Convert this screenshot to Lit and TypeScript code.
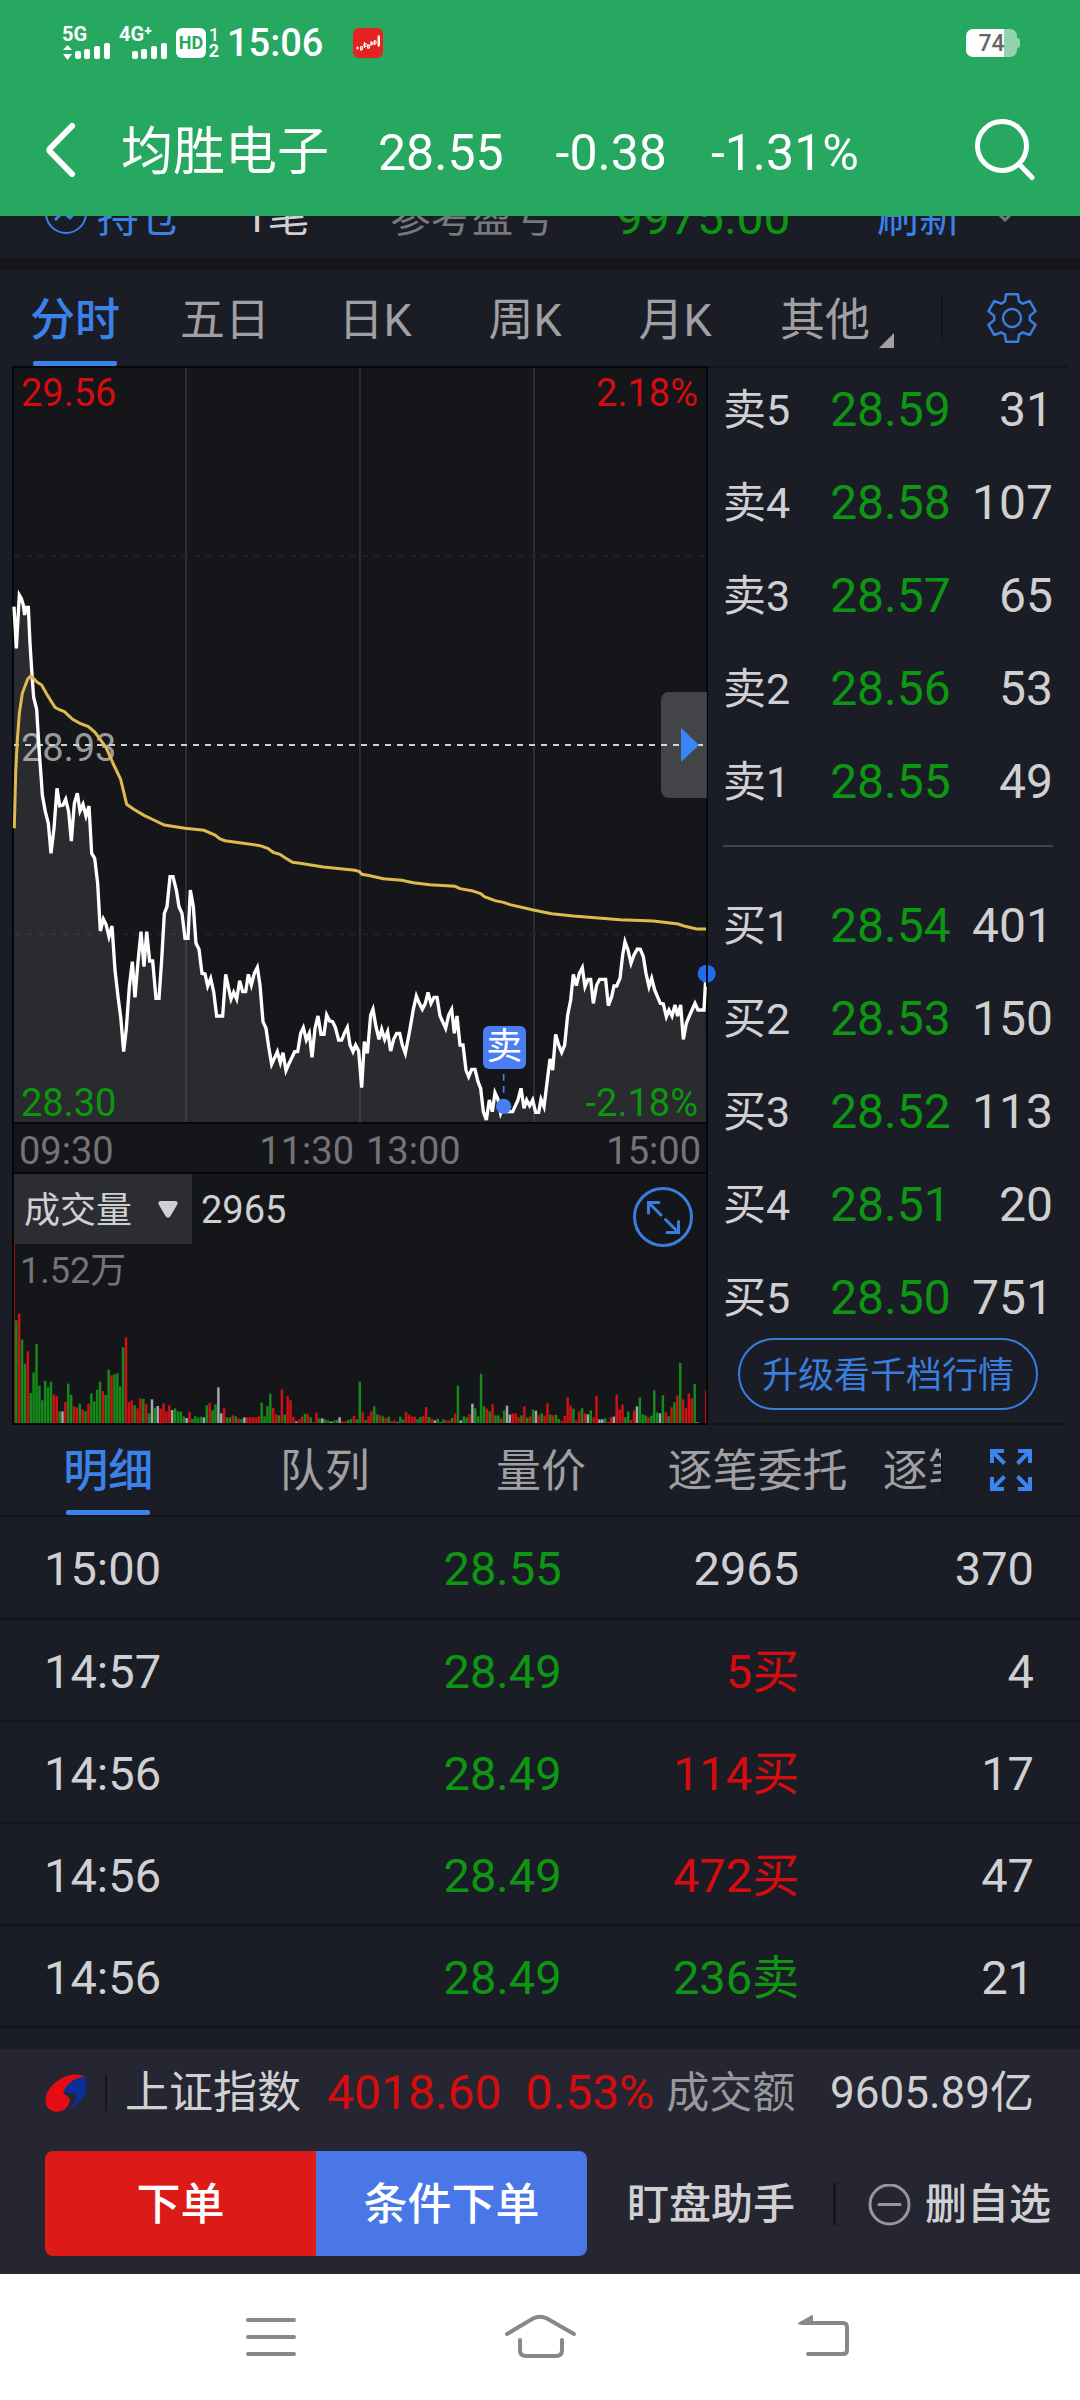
import { LitElement, html, svg, css } from "lit";
import { customElement } from "lit/decorators.js";
import { classMap } from "lit/directives/class-map.js";
import { styleMap } from "lit/directives/style-map.js";

type Point = [number, number];

/* Turns a flat x,y list into points, moved by the given offset. */
const shift = (dx: number, dy: number, flat: number[]): Point[] => {
  const out: Point[] = [];
  for (let i = 0; i < flat.length; i += 2) out.push([flat[i] + dx, flat[i + 1] + dy]);
  return out;
};

/* The plot is 2076 x 2262 units: three units to a pixel on a 1080 wide screen. */
const PLOT_W = 2076;
const PLOT_H = 2262;
const VOL_H = 747;

const PRICE: Point[] = [
  ...shift(-42, -24, [
    42, 740, 49, 865, 58, 705, 64, 715, 70, 735, 74, 765, 78, 742, 85, 742, 90, 850, 97, 960,
    101, 1012, 110, 1048, 118, 1180, 124, 1260,
  ]),
  ...shift(-42, 1116, [
    127, 165, 136, 215, 145, 250, 153, 340, 162, 265, 171, 145, 179, 197, 189, 195, 197, 178,
    206, 215, 214, 303, 223, 190, 232, 160, 240, 213, 249, 193, 258, 228, 267, 198, 275, 340,
    284, 355, 293, 430, 301, 573, 310, 537, 318, 553, 327, 590, 336, 558, 345, 690, 354, 770,
    362, 830, 371, 935, 379, 865, 388, 740, 397, 665, 405, 772, 414, 665, 423, 575, 432, 680,
    440, 575, 449, 663, 458, 663, 468, 775, 477, 775, 485, 660, 493, 520, 501, 500, 510, 410,
    519, 410, 529, 450, 537, 500, 546, 520, 555, 595, 564, 595, 571, 450, 580, 500, 588, 610,
    597, 628, 606, 700, 615, 702, 623, 738, 632, 715, 641, 755, 650, 828, 668, 828, 677, 703,
    686, 745, 693, 777, 701, 757, 710, 777, 719, 722, 728, 755, 737, 755, 745, 703, 754, 735,
    763, 700, 772, 682, 780, 735, 789, 845, 798, 865, 806, 920, 815, 973, 832, 935, 841, 968,
    849, 938, 858, 992, 866, 973, 884, 935, 893, 935, 902, 880, 910, 863, 919, 900, 928, 880,
    936, 952, 945, 865, 954, 828, 963, 883, 972, 883, 980, 825, 989, 843, 998, 845, 1006, 862,
    1016, 900, 1025, 900, 1033, 880, 1042, 862, 1050, 915, 1059, 935, 1067, 915, 1076, 933,
  ]),
  ...shift(1038, 1116, [
    5, 1043, 13, 905, 22, 940, 32, 825, 39, 808, 48, 860, 57, 898, 65, 868, 74, 898, 83, 875,
    92, 933, 101, 898, 110, 880, 119, 880, 127, 915, 136, 940, 148, 878, 160, 808, 169, 768,
    178, 790, 187, 808, 196, 790, 204, 757, 213, 790, 222, 772, 231, 772, 240, 827, 257, 865,
    266, 825, 275, 808, 283, 880, 291, 828, 300, 915, 309, 915, 318, 990, 326, 1010, 335, 988,
    345, 988, 354, 1025, 362, 1045, 370, 1115, 379, 1140, 388, 1080, 397, 1115, 405, 1058,
    414, 1078, 422, 1120, 431, 1097, 440, 1115, 458, 1115, 474, 1080, 483, 1045, 492, 1105,
    500, 1080, 509, 1097, 518, 1080, 527, 1117, 536, 1117, 543, 1078, 552, 1100, 562, 1020,
    570, 957, 578, 990, 587, 883, 596, 915, 605, 937, 614, 915, 623, 825, 632, 780, 640, 703,
    649, 737, 658, 700, 667, 683, 675, 740, 684, 718, 692, 718, 700, 790, 710, 735, 719, 718,
    737, 718, 745, 797, 755, 770, 762, 738, 770, 738, 780, 715, 788, 645, 795, 605, 804, 630,
    813, 670, 822, 645, 832, 627, 841, 628, 850, 650, 858, 700, 867, 740, 875, 715, 884, 750,
    901, 790, 910, 792, 919, 830, 927, 810, 936, 828, 945, 795, 953, 828, 962, 795, 970, 898,
    979, 850, 988, 828, 1005, 790, 1014, 810, 1032, 810, 1037, 715,
  ]),
];

const AVERAGE: Point[] = [
  ...shift(-42, -24, [
    43, 1405, 47, 1240, 52, 1140, 58, 1060, 67, 1000, 83, 957, 92, 948, 100, 955, 112, 967,
    125, 975, 140, 1002, 165, 1042, 180, 1050, 193, 1055, 218, 1078, 240, 1090, 265, 1100,
    285, 1117, 318, 1162, 340, 1212,
  ]),
  ...shift(-42, 1116, [
    362, 118, 380, 193, 400, 207, 432, 226, 455, 237, 493, 255, 555, 265, 612, 271, 645, 285,
    660, 297, 675, 302, 780, 317, 803, 325, 820, 337, 840, 343, 855, 353, 878, 367, 900, 370,
    970, 381, 1065, 391, 1078, 395,
  ]),
  ...shift(1038, 1116, [
    6, 403, 30, 407, 70, 416, 125, 421, 160, 428, 210, 434, 285, 439, 300, 446, 335, 452,
    362, 461, 373, 470, 405, 482, 430, 487, 450, 494, 520, 510, 575, 521, 640, 528, 780, 539,
    880, 543, 955, 552, 975, 559, 1010, 567, 1038, 567,
  ]),
];

/* One entry per minute: colour letter (r up, g down, w flat) and bar height. */
const VOLUME = (
  "r536 g308 r328 g250 g178 r215 g90 g152 g237 g112 g68 g127 g107 g124 r86 r80 g35 w35 r63 g118 " +
  "g85 r50 r46 g58 r40 g35 r58 g89 g65 g100 g124 r96 g84 g160 r143 g146 g149 g110 g227 r257 " +
  "r63 r68 g53 r44 r74 g72 r57 g29 w71 g46 w51 r43 r59 r35 r53 w39 g44 g35 g34 g20 " +
  "w15 r34 g12 g20 g16 g19 w17 g53 r60 g38 g56 w107 w29 r44 g17 g17 r23 g20 r14 g12 " +
  "w17 r17 r17 r17 r17 r20 g61 g20 g51 g88 r45 r26 g23 r101 g25 r80 r68 r19 w5 r11 " +
  "r19 g28 r26 g17 r3 r31 g14 w14 g11 g8 w4 g7 g9 w17 r5 r5 g9 g12 r22 g11 " +
  "g124 r32 g8 r20 r35 g50 g26 r23 g20 r14 g19 r6 r8 w2 g19 g11 r33 r25 r19 r19 " +
  "g11 g18 r22 r48 g18 r13 w8 g13 g4 g11 r8 r8 g15 r28 g112 w8 g20 g17 r26 w58 " +
  "g44 g20 g148 g50 r43 g35 r56 g23 g23 r13 g38 w52 w25 r29 r29 r17 g23 r50 g16 r20 " +
  "g40 w37 r23 g29 r22 r59 g25 r23 g25 g12 r6 r22 r77 r53 g43 r8 r35 g44 r29 w26 " +
  "g38 r17 r82 w11 w11 g14 r4 r17 w19 r85 r40 r55 g17 g34 r9 r37 w50 g77 g26 g23 " +
  "r17 g22 g98 g32 w29 g83 r32 g20 r47 g62 r83 g180 r71 r44 r89 r74 g117 w2 w0 w0 r98"
).split(" ");

const toPoints = (pts: Point[]) => pts.map((p) => p.join(",")).join(" ");

const SELLS = [
  ["卖5", "28.59", "31"],
  ["卖4", "28.58", "107"],
  ["卖3", "28.57", "65"],
  ["卖2", "28.56", "53"],
  ["卖1", "28.55", "49"],
];
const BUYS = [
  ["买1", "28.54", "401"],
  ["买2", "28.53", "150"],
  ["买3", "28.52", "113"],
  ["买4", "28.51", "20"],
  ["买5", "28.50", "751"],
];
const TRADES = [
  { time: "15:00", price: "28.55", volume: "2965", side: "", count: "370" },
  { time: "14:57", price: "28.49", volume: "5买", side: "up", count: "4" },
  { time: "14:56", price: "28.49", volume: "114买", side: "up", count: "17" },
  { time: "14:56", price: "28.49", volume: "472买", side: "up", count: "47" },
  { time: "14:56", price: "28.49", volume: "236卖", side: "down", count: "21" },
];

const base = css`
  * {
    box-sizing: border-box;
  }
  button,
  select {
    font: inherit;
    color: inherit;
    background: none;
    border: 0;
    margin: 0;
    padding: 0;
    cursor: pointer;
  }
  svg {
    display: block;
    flex: none;
  }
  table {
    width: 100%;
    border-collapse: collapse;
    table-layout: fixed;
  }
  td,
  th {
    padding: 0;
    font-weight: 400;
    text-align: left;
  }
  .up {
    color: #d60c0e;
  }
  .down {
    color: #0d9612;
  }
`;

@customElement("status-bar")
export class StatusBar extends LitElement {
  static styles = [
    base,
    css`
      :host {
        display: flex;
        align-items: center;
        height: 84px;
        padding: 2px 60px 0 62px;
        color: #fff;
      }
      .signal {
        display: flex;
        flex-direction: column;
        width: 48px;
        margin-right: 9px;
        font-size: 20px;
        line-height: 16px;
        font-weight: 700;
      }
      .hd {
        display: grid;
        place-items: center;
        width: 30px;
        height: 30px;
        border-radius: 6px;
        background: #fff;
        color: #26a861;
        font-size: 18px;
        line-height: 30px;
        font-weight: 700;
      }
      .sims {
        display: flex;
        flex-direction: column;
        margin-left: 2px;
        width: 12px;
        font-size: 18px;
        line-height: 16px;
        font-weight: 500;
        text-align: center;
      }
      .sims b {
        font-weight: 700;
      }
      .clock {
        margin-left: 7px;
        font-size: 38px;
        line-height: 44px;
        font-weight: 500;
      }
      .app {
        margin-left: 30px;
      }
      .battery {
        display: flex;
        align-items: center;
        margin-left: auto;
      }
      .cell {
        width: 51px;
        height: 28px;
        border-radius: 7px;
        background: linear-gradient(90deg, #fff 74%, #93d4b0 74%);
        color: #666;
        font-size: 23px;
        line-height: 29px;
        font-weight: 500;
        text-align: center;
      }
      .nub {
        width: 3px;
        height: 10px;
        border-radius: 0 3px 3px 0;
        background: #93d4b0;
      }
    `,
  ];

  private bars() {
    return svg`
      <rect x="13" y="9" width="6" height="8" rx="2"></rect>
      <rect x="22" y="7" width="6" height="10" rx="2"></rect>
      <rect x="32" y="4" width="6" height="13" rx="2"></rect>
      <rect x="42" y="1" width="6" height="16" rx="2"></rect>`;
  }

  render() {
    return html`
      <div class="signal">
        <span>5G</span>
        <svg width="48" height="18" viewBox="0 0 48 18" fill="#fff">
          <path d="M5.500 3l4.500 5h-9zM5.500 18l4.500-6h-9z"></path>
          ${this.bars()}
        </svg>
      </div>
      <div class="signal">
        <span>4G⁺</span>
        <svg width="48" height="18" viewBox="0 0 48 18" fill="#fff">${this.bars()}</svg>
      </div>
      <span class="hd">HD</span>
      <span class="sims"><span>1</span><b>2</b></span>
      <span class="clock">15:06</span>
      <svg class="app" width="30" height="30" viewBox="0 0 30 30">
        <rect width="30" height="30" rx="6" fill="#e62222"></rect>
        <g fill="none" stroke="#fff">
          <path d="M3 20h3M4.500 18.500v3M8 18v5M7.500 18.500h2v3h-2zM11.500 14v6M11 15.500h2v3h-2z"></path>
          <path d="M15 16v5M14.500 17h2v3h-2zM18 13v5M18 14.500h2v2h-2z"></path>
          <path d="M21.500 12v5M21 13h2v3h-2zM25 8.500h1.500v9H25zM25.800 7v12"></path>
        </g>
      </svg>
      <div class="battery"><span class="cell">74</span><span class="nub"></span></div>
    `;
  }
}

@customElement("quote-header")
export class QuoteHeader extends LitElement {
  static styles = [
    base,
    css`
      :host {
        display: flex;
        align-items: center;
        height: 132px;
        padding: 0 44px 0 43px;
        color: #fff;
        font-size: 50px;
        line-height: 60px;
      }
      .back {
        margin-right: 42px;
      }
      h1,
      span {
        padding-top: 6px;
      }
      h1 {
        margin: 0 49px 0 0;
        font-size: 52px;
        line-height: 60px;
        font-weight: 400;
      }
      .price {
        margin-right: 52px;
      }
      .change {
        margin-right: 44px;
      }
      .search {
        margin-left: auto;
      }
    `,
  ];

  render() {
    return html`
      <button class="back" aria-label="返回">
        <svg width="36" height="60" viewBox="0 0 36 60" fill="none" stroke="#fff" stroke-width="6" stroke-linecap="round" stroke-linejoin="round">
          <path d="M29 6L7 28.500Q5.500 30 7 31.500L29 54"></path>
        </svg>
      </button>
      <h1>均胜电子</h1>
      <span class="price">28.55</span>
      <span class="change">-0.38</span>
      <span>-1.31%</span>
      <button class="search" aria-label="搜索">
        <svg width="64" height="64" viewBox="0 0 64 64" fill="none" stroke="#fff" stroke-width="5" stroke-linecap="round">
          <circle cx="30" cy="28" r="24.500"></circle>
          <path d="M47 46L60 59.500"></path>
        </svg>
      </button>
    `;
  }
}

@customElement("position-row")
export class PositionRow extends LitElement {
  static styles = [
    base,
    css`
      :host {
        display: grid;
        grid-template-columns: 52fr 147fr 146fr 226fr 261fr 113fr 90fr;
        align-items: end;
        align-content: end;
        height: 42px;
        padding: 0 0 10px 45px;
        overflow: hidden;
        color: #d0d0d2;
        font-size: 42px;
        line-height: 60px;
        white-space: nowrap;
      }
      .blue {
        color: #3a82e8;
        text-align: left;
      }
      .dim {
        color: #77787c;
        font-size: 41px;
      }
      .profit {
        font-size: 48px;
      }
    `,
  ];

  render() {
    return html`
      <svg width="44" height="58" viewBox="0 0 44 58" fill="none" stroke="#3a82e8" stroke-width="2">
        <circle cx="21" cy="23" r="20"></circle>
        <path stroke-width="3" d="M10 30l8-8 7 6 7-8"></path>
      </svg>
      <span class="blue">持仓</span>
      <span>1笔</span>
      <span class="dim">参考盈亏</span>
      <span class="down profit">9975.00</span>
      <button class="blue">刷新</button>
      <svg width="30" height="56" viewBox="0 0 30 56" fill="none" stroke="#77787c" stroke-width="3">
        <path d="M3 16l12 12 12-12"></path>
      </svg>
    `;
  }
}

@customElement("period-tabs")
export class PeriodTabs extends LitElement {
  static styles = [
    base,
    css`
      :host {
        display: grid;
        grid-template-columns: minmax(0, 900fr) minmax(0, 180fr);
        height: 96px;
        color: #a0a0a3;
        font-size: 45px;
        line-height: 60px;
      }
      nav {
        display: grid;
        grid-template-columns: repeat(6, 1fr);
      }
      .tab {
        display: flex;
        flex-direction: column;
        align-items: center;
        justify-content: flex-end;
      }
      .tab::after {
        content: "";
        width: 84px;
        height: 5px;
        margin-top: 10px;
        border-radius: 2px;
      }
      .on {
        color: #3a82e8;
        font-weight: 500;
      }
      .on::after {
        background: #3a82e8;
      }
      .more {
        position: relative;
      }
      .corner {
        position: absolute;
        right: 6px;
        bottom: 18px;
      }
      .tools {
        display: flex;
        align-items: center;
        gap: 43px;
        padding-left: 41px;
      }
      .rule {
        width: 2px;
        height: 46px;
        background: #14151a;
      }
    `,
  ];

  private gear() {
    const pts: string[] = [];
    const add = (deg: number, r: number) => {
      const a = (deg * Math.PI) / 180;
      pts.push(`${(26 + r * Math.sin(a)).toFixed(2)},${(26 - r * Math.cos(a)).toFixed(2)}`);
    };
    for (let i = 0; i < 6; i++) {
      add(i * 60 - 23, 18);
      add(i * 60 - 14, 24.5);
      add(i * 60 + 14, 24.5);
      add(i * 60 + 23, 18);
    }
    return pts.join(" ");
  }

  render() {
    const tabs = ["分时", "五日", "日K", "周K", "月K"];
    return html`
      <nav>
        ${tabs.map((t, i) => html`<button class=${classMap({ tab: true, on: i === 0 })}>${t}</button>`)}
        <button class="tab more">
          其他
          <svg class="corner" width="15" height="15" viewBox="0 0 15 15" fill="#a0a0a3"><path d="M15 0v15H0z"></path></svg>
        </button>
      </nav>
      <div class="tools">
        <span class="rule"></span>
        <button aria-label="设置">
          <svg width="52" height="52" viewBox="0 0 52 52" fill="none" stroke="#3a7ddc" stroke-width="2.500" stroke-linejoin="round">
            <polygon points=${this.gear()}></polygon>
            <circle cx="26" cy="26" r="9"></circle>
          </svg>
        </button>
      </div>
    `;
  }
}

@customElement("price-chart")
export class PriceChart extends LitElement {
  static styles = [
    base,
    css`
      :host {
        display: block;
        background: #15161a;
        color: #747478;
        font-size: 38px;
        line-height: 40px;
      }
      .plot {
        position: relative;
        border: 2px solid #060709;
      }
      .lines {
        position: relative;
        width: 100%;
        height: auto;
        overflow: visible;
      }
      .label {
        position: absolute;
      }
      .left {
        left: 7px;
      }
      .right {
        right: 8px;
      }
      .top {
        top: 5px;
      }
      .bottom {
        bottom: -1px;
      }
      .middle {
        top: 50%;
        margin-top: -17px;
        color: #99999c;
      }
      .handle {
        position: absolute;
        right: -1px;
        top: 50%;
        width: 46px;
        height: 106px;
        margin-top: -53px;
        border-radius: 8px 0 0 8px;
        background: rgba(255, 255, 255, 0.2);
      }
      .handle svg {
        margin-left: 20px;
      }
      .mark {
        position: absolute;
        width: 43px;
        height: 43px;
        margin-left: -21px;
        border-radius: 6px;
        background: #4a7cf2;
        color: #fff;
        font-size: 36px;
        line-height: 43px;
        text-align: center;
      }
      .axis {
        display: grid;
        grid-template-columns: 1fr auto auto 1fr;
        column-gap: 12px;
        align-items: center;
        height: 48px;
        padding: 5px 5px 0;
        border: solid #060709;
        border-width: 0 2px;
      }
      .axis :last-child {
        text-align: right;
      }
      .volume {
        position: relative;
        height: 253px;
        border: 2px solid #060709;
      }
      .head {
        display: flex;
        align-items: center;
        gap: 9px;
        color: #d0d0d2;
      }
      .head span {
        padding-top: 2px;
      }
      .picker {
        position: relative;
      }
      .picker select {
        appearance: none;
        display: block;
        width: 178px;
        height: 70px;
        padding: 3px 0 0 10px;
        background: #2c2d32;
        font-size: 36px;
      }
      .picker svg {
        position: absolute;
        right: 14px;
        top: 27px;
        pointer-events: none;
      }
      .peak {
        padding: 7px 6px 0;
        font-size: 36px;
      }
      .expand {
        position: absolute;
        right: 13px;
        top: 13px;
      }
      .bars {
        position: absolute;
        inset: 0;
        width: 100%;
        height: 100%;
        pointer-events: none;
      }
    `,
  ];

  render() {
    const line = toPoints(PRICE);
    const tone: Record<string, string> = { r: "#cc1212", g: "#158a1a", w: "#a4a5aa" };
    const mark: Point = [1469, 2215];
    const markStyle = {
      left: `${((mark[0] / PLOT_W) * 100).toFixed(2)}%`,
      top: `${((1974 / PLOT_H) * 100).toFixed(2)}%`,
    };
    return html`
      <div class="plot">
        <span class="label left middle">28.93</span>
        <svg class="lines" viewBox="0 0 ${PLOT_W} ${PLOT_H}" fill="none">
          <g stroke="#2b2d36" stroke-width="6">
            ${[516, 1038, 1560].map((x) => svg`<path d="M${x} 0V${PLOT_H}"></path>`)}
          </g>
          <g stroke="#23252a" stroke-width="5" stroke-dasharray="18 18">
            <path d="M0 563H2076M0 1699H2076"></path>
          </g>
          <path d="M0 1131H2076" stroke="#cfcfcf" stroke-width="6" stroke-dasharray="18 18" stroke-dashoffset="3"></path>
          <polygon points="0,${PLOT_H} ${line} ${PLOT_W},${PLOT_H}" fill="#fff" fill-opacity="0.09"></polygon>
          <polyline points=${line} stroke="#fff" stroke-width="10"></polyline>
          <polyline points=${toPoints(AVERAGE)} stroke="#e0ba50" stroke-width="9"></polyline>
          <path d="M${mark[0]} 2118V2178" stroke="#4a7cf2" stroke-width="5" stroke-dasharray="20 16"></path>
          <circle cx=${mark[0]} cy=${mark[1]} r="23" fill="#4a7cf2"></circle>
          <circle cx="2078" cy="1817" r="27" fill="#1e6cf0"></circle>
          <path d="M2079 1780V1856" stroke="#060709" stroke-width="6"></path>
        </svg>
        <span class="label left top up">29.56</span>
        <span class="label right top up">2.18%</span>
        <span class="label left bottom down">28.30</span>
        <span class="label right bottom down">-2.18%</span>
        <span class="mark" style=${styleMap(markStyle)}>卖</span>
        <button class="handle" aria-label="展开">
          <svg width="18" height="34" viewBox="0 0 18 34" fill="#3a85f5"><path d="M0 0l18 17L0 34z"></path></svg>
        </button>
      </div>
      <div class="axis"><span>09:30</span><span>11:30</span><span>13:00</span><span>15:00</span></div>
      <div class="volume">
        <div class="head">
          <div class="picker">
            <select aria-label="指标"><option>成交量</option></select>
            <svg width="20" height="17" viewBox="0 0 20 17" fill="#d0d0d2">
              <path d="M3 0h14q4 0 2 4l-6.500 11q-2.500 3.500-5 0L1 4Q-1 0 3 0z"></path>
            </svg>
          </div>
          <span>2965</span>
        </div>
        <div class="peak">1.52万</div>
        <svg class="bars" viewBox="0 0 ${PLOT_W} ${VOL_H}" preserveAspectRatio="none">
          ${VOLUME.map((v, i) => {
            const h = Number(v.slice(1));
            return svg`<rect x=${(i * 8.66 - 5.5).toFixed(1)} y=${VOL_H - h} width="7.500" height=${h} fill=${tone[v[0]]}></rect>`;
          })}
        </svg>
        <button class="expand" aria-label="放大">
          <svg width="60" height="60" viewBox="0 0 60 60" fill="none" stroke="#3a7ddc" stroke-width="3">
            <circle cx="30" cy="30" r="28.500"></circle>
            <g stroke-linecap="round">
              <path d="M28 28L15.500 15.500M15.500 26V15.500H26M32.500 32.500L45.500 45.500M45.500 34.500V45.500H34"></path>
            </g>
          </svg>
        </button>
      </div>
    `;
  }
}

@customElement("order-book")
export class OrderBook extends LitElement {
  static styles = [
    base,
    css`
      :host {
        display: flex;
        flex-direction: column;
        margin-right: 12px;
        padding: 12px 15px 13px;
        border: solid #14151a;
        border-width: 2px 0;
        color: #d0d0d2;
        font-size: 48px;
        line-height: 60px;
      }
      td,
      th {
        padding-bottom: 33px;
        text-align: right;
      }
      th {
        width: 27%;
        font-size: 43px;
        text-align: left;
        white-space: nowrap;
      }
      .price {
        width: 42%;
      }
      .buy tr:last-child > * {
        padding-bottom: 0;
      }
      hr {
        width: 100%;
        height: 2px;
        margin: 0 0 49px;
        border: 0;
        background: #42444f;
      }
      .upgrade {
        height: 72px;
        margin: 10px 15px 0;
        padding-top: 3px;
        border: 2px solid #3a7ddc;
        border-radius: 36px;
        color: #3a7ddc;
        font-size: 36px;
        line-height: 60px;
        white-space: nowrap;
      }
    `,
  ];

  private rows(list: string[][]) {
    return list.map(
      ([name, price, amount]) => html`<tr>
        <th scope="row">${name}</th>
        <td class="price down">${price}</td>
        <td>${amount}</td>
      </tr>`
    );
  }

  render() {
    return html`
      <table><tbody>${this.rows(SELLS)}</tbody></table>
      <hr />
      <table class="buy"><tbody>${this.rows(BUYS)}</tbody></table>
      <button class="upgrade">升级看千档行情</button>
    `;
  }
}

@customElement("trade-list")
export class TradeList extends LitElement {
  static styles = [
    base,
    css`
      :host {
        display: block;
        color: #d0d0d2;
        font-size: 47px;
        line-height: 60px;
      }
      .bar {
        display: flex;
        height: 92px;
        border-bottom: 2px solid #14151a;
        color: #a0a0a3;
        font-size: 45px;
      }
      nav {
        flex: 941;
        display: flex;
        min-width: 0;
        overflow: hidden;
      }
      .tab {
        flex: 0 0 23%;
        display: flex;
        flex-direction: column;
        align-items: center;
        justify-content: flex-end;
        white-space: nowrap;
      }
      .tab::after {
        content: "";
        width: 84px;
        height: 5px;
        margin-top: 8px;
        border-radius: 2px;
      }
      .on {
        color: #3a82e8;
        font-weight: 500;
      }
      .on::after {
        background: #3a82e8;
      }
      .next {
        align-items: flex-start;
        padding-left: 17px;
      }
      .tools {
        flex: 139;
        display: flex;
        align-items: center;
        gap: 47px;
      }
      .rule {
        width: 2px;
        height: 46px;
        background: #14151a;
      }
      td {
        height: 102px;
        padding-top: 3px;
        border-bottom: 2px solid #14151a;
        text-align: right;
      }
      .time {
        width: 28%;
        padding-left: 44px;
        text-align: left;
      }
      .price {
        width: 24%;
      }
      .amount {
        width: 22%;
      }
      .count {
        padding-right: 46px;
      }
    `,
  ];

  render() {
    const tabs = ["明细", "队列", "量价", "逐笔委托"];
    return html`
      <div class="bar">
        <nav>
          ${tabs.map((t, i) => html`<button class=${classMap({ tab: true, on: i === 0 })}>${t}</button>`)}
          <button class="tab next">逐笔</button>
        </nav>
        <div class="tools">
          <span class="rule"></span>
          <button aria-label="全屏">
            <svg width="42" height="42" viewBox="0 0 42 42" fill="none" stroke="#3a85f0" stroke-width="4">
              <path d="M14 2H2V14M2 2L14.500 14.500M28 2H40V14M40 2L27.500 14.500"></path>
              <path d="M14 40H2V28M2 40L14.500 27.500M28 40H40V28M40 40L27.500 27.500"></path>
            </svg>
          </button>
        </div>
      </div>
      <table>
        <tbody>
          ${TRADES.map(
            (t) => html`<tr>
              <td class="time">${t.time}</td>
              <td class="price down">${t.price}</td>
              <td class="amount ${t.side}">${t.volume}</td>
              <td class="count">${t.count}</td>
            </tr>`
          )}
        </tbody>
      </table>
    `;
  }
}

@customElement("action-footer")
export class ActionFooter extends LitElement {
  static styles = [
    base,
    css`
      :host {
        display: block;
        padding-bottom: 18px;
        background: #252632;
        color: #d0d0d2;
        font-size: 44px;
        line-height: 60px;
        white-space: nowrap;
      }
      .index {
        display: flex;
        align-items: center;
        height: 86px;
        padding: 2px 46px 0 45px;
      }
      .rule {
        width: 2px;
        height: 36px;
        margin: 0 18px;
        background: #14151a;
      }
      .value {
        margin: 0 24px 0 26px;
        font-size: 48px;
      }
      .ratio {
        font-size: 48px;
      }
      .dim {
        margin-left: 12px;
        color: #98989c;
        font-size: 43px;
      }
      .turnover {
        margin-left: auto;
      }
      .actions {
        display: flex;
        align-items: center;
        margin-top: 16px;
        padding: 0 29px 0 45px;
        font-size: 42px;
        font-weight: 500;
      }
      .actions button {
        padding-top: 3px;
      }
      .order {
        flex: 1;
        height: 105px;
        border-radius: 8px 0 0 8px;
        background: #dc1b19;
        color: #fff;
        font-size: 44px;
      }
      .smart {
        border-radius: 0 8px 8px 0;
        background: #4a77e8;
      }
      .watch {
        margin: 0 38px 0 40px;
      }
      .split {
        width: 3px;
        height: 42px;
        background: #14151a;
      }
      .remove {
        display: flex;
        align-items: center;
        gap: 14px;
        margin-left: 32px;
      }
    `,
  ];

  render() {
    return html`
      <div class="index">
        <svg width="42" height="38" viewBox="0 0 121 110">
          <path fill="#0a2f96" d="M114 9C92 5 62 22 51 48C54 62 84 48 89 62C92 80 80 93 60 105C95 94 121 65 120 35C120 22 119 13 114 9z"></path>
          <path fill="#e60c14" d="M116 8C84-10 34 10 10 46C-8 76 2 109 34 109C58 109 72 92 71 72C69 60 49 62 54 49C62 28 90 8 116 8z"></path>
        </svg>
        <span class="rule"></span>
        <span>上证指数</span>
        <span class="value up">4018.60</span>
        <span class="ratio up">0.53%</span>
        <span class="dim">成交额</span>
        <span class="turnover">9605.89亿</span>
      </div>
      <div class="actions">
        <button class="order">下单</button>
        <button class="order smart">条件下单</button>
        <button class="watch">盯盘助手</button>
        <span class="split"></span>
        <button class="remove">
          <svg width="43" height="43" viewBox="0 0 43 43" fill="none" stroke="#98989c" stroke-width="3" stroke-linecap="round">
            <circle cx="21.500" cy="20.500" r="19.500"></circle>
            <path d="M11 20.500h21"></path>
          </svg>
          删自选
        </button>
      </div>
    `;
  }
}

@customElement("system-nav")
export class SystemNav extends LitElement {
  static styles = [
    base,
    css`
      :host {
        display: grid;
        grid-template-columns: repeat(3, 1fr);
        align-items: center;
        height: 126px;
        padding: 0 12.5%;
        background: #fff;
      }
      button {
        justify-self: center;
      }
    `,
  ];

  render() {
    return html`
      <button aria-label="菜单">
        <svg width="90" height="60" viewBox="0 0 90 60" fill="none" stroke="#888" stroke-width="4" stroke-linecap="round">
          <path d="M23 13h46M23 30h46M23 47h46"></path>
        </svg>
      </button>
      <button aria-label="主页">
        <svg width="90" height="60" viewBox="0 0 90 60" fill="none" stroke="#888" stroke-width="4" stroke-linecap="round">
          <path d="M12 27L38 11.500Q45 8 52 11.500L79 27M25 33V43Q25 49 31 49H61Q67 49 67 43V33"></path>
        </svg>
      </button>
      <button aria-label="后退">
        <svg width="90" height="60" viewBox="0 0 90 60" fill="none" stroke="#888" stroke-width="4" stroke-linecap="round" stroke-linejoin="round">
          <path d="M37 16H78Q82 16 82 20V43Q82 47 78 47H43"></path>
          <path fill="#888" stroke-width="2" d="M34 16.500L47 9V17z"></path>
        </svg>
      </button>
    `;
  }
}

@customElement("app-root")
export class AppRoot extends LitElement {
  static styles = [
    base,
    css`
      :host {
        display: flex;
        flex-direction: column;
        min-height: 100vh;
        background: #1b1d26;
        font-family: Roboto, "Noto Sans CJK SC", sans-serif;
      }
      header {
        background: #26a861;
      }
      .gap {
        height: 12px;
        background: #15161a;
      }
      .market {
        display: grid;
        grid-template-columns: minmax(0, 696fr) minmax(0, 372fr);
        padding-left: 12px;
      }
      .bottom {
        margin-top: auto;
      }
    `,
  ];

  render() {
    return html`
      <header>
        <status-bar></status-bar>
        <quote-header></quote-header>
      </header>
      <position-row></position-row>
      <div class="gap"></div>
      <period-tabs></period-tabs>
      <div class="market">
        <price-chart></price-chart>
        <order-book></order-book>
      </div>
      <trade-list></trade-list>
      <div class="bottom">
        <action-footer></action-footer>
        <system-nav></system-nav>
      </div>
    `;
  }
}
